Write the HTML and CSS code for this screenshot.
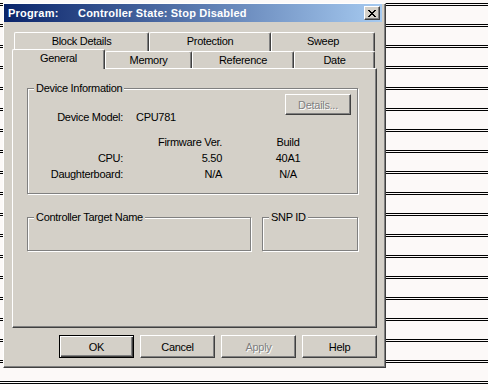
FILE: index.html
```html
<!DOCTYPE html>
<html lang="en">
<head>
    <meta charset="UTF-8">
    <meta name="viewport" content="width=device-width, initial-scale=1.0">
    <link rel="stylesheet" href="styles.css">
</head>
<body>

    <div class="window">
        <div class="frame">
            <div class="titlebar">
                <span class="title-prog">Program:</span>
                <span class="title-state">Controller State: Stop Disabled</span>
                <button class="close-btn">
                    <svg width="8" height="7" viewBox="0 0 8 7">
                        <path d="M0 0h2v1H0z M6 0h2v1H6z M1 1h2v1H1z M5 1h2v1H5z M2 2h4v1H2z M3 3h2v1H3z M2 4h4v1H2z M1 5h2v1H1z M5 5h2v1H5z M0 6h2v1H0z M6 6h2v1H6z" fill="#000"/>
                    </svg>
                </button>
            </div>

            <div class="tabs">
                <div class="tab-row back">
                    <div class="tab tab-block">Block Details</div>
                    <div class="tab tab-protect">Protection</div>
                    <div class="tab tab-sweep">Sweep</div>
                </div>
                <div class="tab-row front">
                    <div class="tab active tab-general">General</div>
                    <div class="tab tab-memory">Memory</div>
                    <div class="tab tab-ref">Reference</div>
                    <div class="tab tab-date">Date</div>
                </div>

                <div class="panel">
                    <div class="group group-info">
                        <span class="group-label">Device Information</span>
                        <div class="info-top">
                            <span class="lbl">Device Model:</span>
                            <span class="val">CPU781</span>
                            <button class="btn btn-details" disabled>Details...</button>
                        </div>
                        <div class="info-table">
                            <div class="info-row">
                                <span class="lbl"></span>
                                <span class="col-fw">Firmware Ver.</span>
                                <span class="col-build">Build</span>
                            </div>
                            <div class="info-row">
                                <span class="lbl">CPU:</span>
                                <span class="col-fw">5.50</span>
                                <span class="col-build">40A1</span>
                            </div>
                            <div class="info-row">
                                <span class="lbl">Daughterboard:</span>
                                <span class="col-fw">N/A</span>
                                <span class="col-build">N/A</span>
                            </div>
                        </div>
                    </div>

                    <div class="group-pair">
                        <div class="group group-target">
                            <span class="group-label">Controller Target Name</span>
                        </div>
                        <div class="group group-snp">
                            <span class="group-label">SNP ID</span>
                        </div>
                    </div>
                </div>
            </div>

            <div class="actions">
                <button class="btn btn-default">OK</button>
                <button class="btn">Cancel</button>
                <button class="btn" disabled>Apply</button>
                <button class="btn">Help</button>
            </div>
        </div>
    </div>

</body>
</html>
```

FILE: styles.css
```css
body {
    margin: 0;
    width: 488px;
    height: 390px;
    overflow: hidden;
    font-family: "Liberation Sans", Arial, sans-serif;
    font-size: 11px;
    color: #000;
    background-color: #fcf9f8;
    background-image: linear-gradient(to bottom, #000 0, #000 1px, transparent 1px, transparent 2px, #000 2px, #000 3px, transparent 3px);
    background-size: 100% 21px;
    background-position: 0 3px;
}
.window {
    box-sizing: border-box;
    margin: 3px 0 0 3px;
    width: 383px;
    height: 365px;
    background: #d4d0c8;
    border-left: 1px solid #fff;
    border-top: 1px solid #fff;
    border-right: 1px solid #404040;
    border-bottom: 1px solid #404040;
}
.frame {
    box-sizing: border-box;
    height: 100%;
    padding-right: 2px;
    border-right: 1px solid #808080;
    border-bottom: 1px solid #808080;
}
.titlebar {
    display: flex;
    align-items: center;
    height: 18px;
    padding-left: 4px;
    background: linear-gradient(to right, #0a246a, #a6caf0);
    color: #fff;
    font-weight: bold;
    letter-spacing: 0.2px;
}
.title-prog {
    width: 70px;
}
.close-btn {
    box-sizing: border-box;
    display: flex;
    align-items: center;
    justify-content: center;
    margin-left: auto;
    margin-right: 2px;
    width: 16px;
    height: 14px;
    padding: 0;
    background: #d4d0c8;
    border: 1px solid;
    border-color: #fff #404040 #404040 #fff;
    box-shadow: inset -1px -1px #808080;
}

/* tabs */
.tabs {
    margin: 10px 0 0 8px;
    width: 365px;
    letter-spacing: -0.3px;
}
.tab-row {
    display: flex;
}
.tab-row.back {
    height: 19px;
    padding-left: 2px;
}
.tab-row.front {
    height: 17px;
    align-items: flex-end;
}
.tab {
    box-sizing: border-box;
    background: #d4d0c8;
    border-left: 1px solid #fff;
    border-top: 1px solid #fff;
    border-right: 1px solid #404040;
    box-shadow: inset -1px 0 #808080;
    border-radius: 2px 2px 0 0;
    text-align: center;
}
.back .tab {
    height: 19px;
    line-height: 17px;
}
.front .tab {
    height: 17px;
    line-height: 16px;
}
.front .tab.active {
    position: relative;
    z-index: 1;
    height: 20px;
    margin-bottom: -1px;
}
.tab-block { width: 135px; }
.tab-protect { width: 122px; }
.tab-sweep { width: 104px; }
.tab-general { width: 93px; }
.tab-memory { width: 87px; }
.tab-ref { width: 102px; }
.tab-date { width: 81px; }

.panel {
    box-sizing: border-box;
    height: 260px;
    padding: 19px 0 0 14px;
    border-top: 1px solid #fff;
    border-left: 1px solid #fff;
    border-right: 1px solid #404040;
    border-bottom: 1px solid #404040;
    box-shadow: inset -1px -1px #808080;
}

/* group boxes */
.group {
    position: relative;
    box-sizing: border-box;
    border: 1px solid #808080;
    box-shadow: inset 1px 1px #fff, 1px 1px #fff;
}
.group-label {
    position: absolute;
    top: -7px;
    left: 6px;
    padding: 0 2px;
    line-height: 13px;
    background: #d4d0c8;
}
.group-info {
    width: 331px;
    height: 106px;
}
.info-top {
    display: flex;
    align-items: flex-start;
    padding-top: 5px;
}
.lbl {
    width: 95px;
    text-align: right;
}
.info-top .lbl,
.info-top .val {
    margin-top: 17px;
    line-height: 13px;
}
.info-top .val {
    margin-left: 13px;
}
.info-table {
    margin-top: 10px;
}
.info-row {
    display: flex;
    line-height: 16px;
}
.col-fw {
    width: 99px;
    text-align: right;
}
.col-build {
    width: 30px;
    margin-left: 51px;
    text-align: center;
}
.group-pair {
    display: flex;
    gap: 11px;
    margin-top: 23px;
}
.group-target {
    width: 224px;
    height: 34px;
}
.group-snp {
    width: 96px;
    height: 34px;
}

/* buttons */
.btn {
    box-sizing: border-box;
    width: 75px;
    height: 23px;
    padding: 0;
    font-family: "Liberation Sans", Arial, sans-serif;
    font-size: 11px;
    letter-spacing: -0.3px;
    color: #000;
    background: #d4d0c8;
    border: 1px solid;
    border-color: #fff #404040 #404040 #fff;
    box-shadow: inset -1px -1px #808080;
}
.btn:disabled {
    color: #808080;
    text-shadow: 1px 1px #fff;
}
.btn-default {
    border: 1px solid #000;
    box-shadow: inset 1px 1px #fff, inset -1px -1px #404040, inset -2px -2px #808080;
}
.btn-details {
    width: 66px;
    height: 21px;
    margin-left: auto;
    margin-right: 6px;
}
.actions {
    display: flex;
    gap: 6px;
    margin-top: 7px;
    padding-left: 55px;
}
```
